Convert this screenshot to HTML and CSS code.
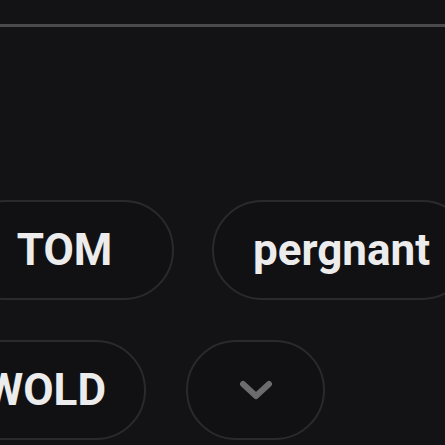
FILE: index.html
```html
<!DOCTYPE html>
<html>
<head>
<meta charset="utf-8">
<link rel="stylesheet" href="styles.css">
</head>
<body>
<div class="page">
  <div class="divider"></div>
  <div class="chips">
    <div class="row">
      <span class="chip chip-tom">TOM</span>
      <span class="chip chip-text">pergnant</span>
    </div>
    <div class="row row-second">
      <span class="chip chip-wold">WOLD</span>
      <span class="chip chip-more">
        <svg width="34" height="22" viewBox="0 0 34 22"><path d="M4 4 L17 16 L30 4" fill="none" stroke="#6c6c6e" stroke-width="6" stroke-linecap="round" stroke-linejoin="round"/></svg>
      </span>
    </div>
  </div>
</div>
</body>
</html>
```
FILE: styles.css
```css
html, body {
  margin: 0;
  padding: 0;
  background: #131315;
}
.page {
  width: 445px;
  height: 445px;
  overflow: hidden;
  font-family: Roboto, "Liberation Sans", sans-serif;
}
.divider {
  margin-top: 24px;
  height: 3px;
  background: #4a4a4c;
}
.chips {
  padding-top: 173px;
  display: flex;
  flex-direction: column;
  gap: 40px;
}
.row {
  display: flex;
  gap: 38px;
  white-space: nowrap;
}
.row-second {
  gap: 40px;
}
.chip {
  box-sizing: border-box;
  flex: none;
  height: 100px;
  border: 2px solid #2a2a2d;
  border-radius: 50px;
  background: #111113;
  display: flex;
  align-items: center;
  color: #ececec;
  font-weight: 700;
  font-size: 44px;
}
.chip-tom {
  width: 219px;
  margin-left: -45px;
  justify-content: center;
}
.chip-text {
  padding: 0 40px 0 39px;
}
.chip-wold {
  width: 200px;
  margin-left: -54px;
  justify-content: flex-end;
  padding-right: 38px;
}
.chip-more {
  width: 139px;
  justify-content: center;
}
.chip-more svg {
  display: block;
  margin-top: 2px;
}
```
